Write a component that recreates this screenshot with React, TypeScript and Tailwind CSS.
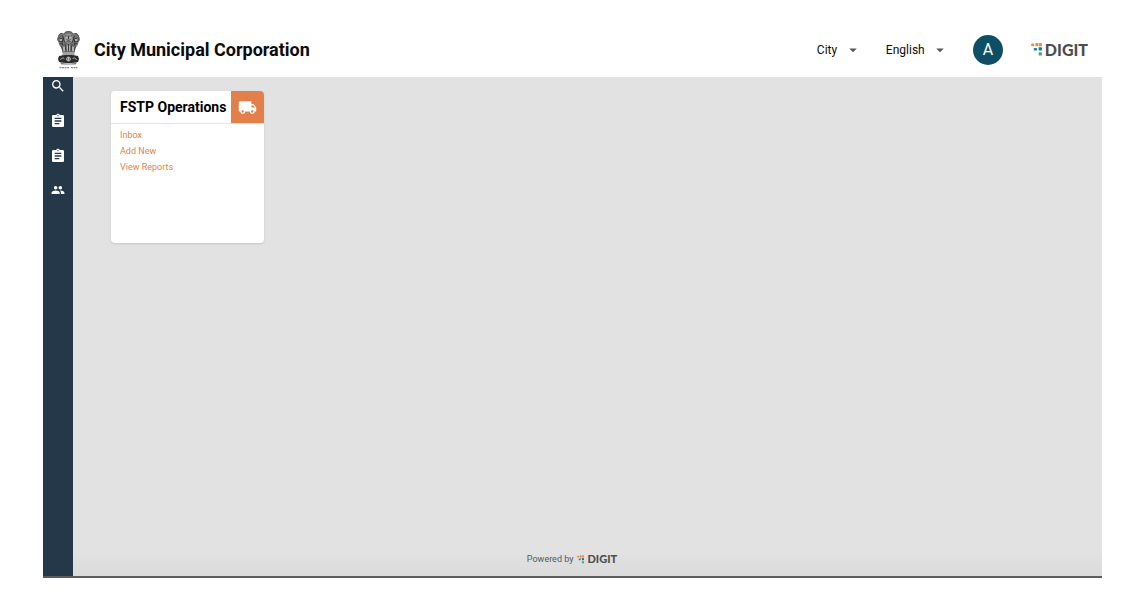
import { MdArrowDropDown, MdAssignment, MdLocalShipping, MdPeople, MdSearch } from 'react-icons/md';

const navItems = [
  { label: 'Search', Icon: MdSearch, size: 'size-4' },
  { label: 'Inbox', Icon: MdAssignment, size: 'size-4' },
  { label: 'Applications', Icon: MdAssignment, size: 'size-4' },
  { label: 'Employees', Icon: MdPeople, size: 'size-3.5' },
];

const cardLinks = ['Inbox', 'Add New', 'View Reports'];

const Emblem = () => (
  <svg className="w-[23px] h-[38px] shrink-0" viewBox="0 0 44 76" role="img" aria-label="State emblem">
    {/* lions */}
    <path d="M14 4c3-4 13-4 16 0l4 1c4-1 8 2 8 6 2 3 2 7 0 10 0 5-2 9-5 11l-3 9H10l-3-9c-3-2-5-6-5-11-2-3-2-7 0-10 0-4 4-7 8-6z" fill="#757575" />
    <path d="M15 8c4-3 10-3 14 0l2 6-3 8-6 3-6-3-3-8z" fill="#a0a0a0" />
    <g fill="none" stroke="#2b2b2b" strokeWidth="1.6">
      <path d="M14 4c3-4 13-4 16 0M10 5c-4-1-8 2-8 6-2 3-2 7 0 10m32-16c4-1 8 2 8 6 2 3 2 7 0 10" />
      <path d="M15 9c2 2 4 2 5 1m9-1c-2 2-4 2-5 1M22 9v7m-4 1c2 2 6 2 8 0m-8 4c2 1 6 1 8 0" />
      <path d="M13 12c-2 5 0 10 4 13m14-13c2 5 0 10-4 13M4 14l6 2m-7 5 8-1m29-6-6 2m7 5-8-1" />
      <path d="M9 9c3 3 3 7 1 11s0 8 2 11m23-22c-3 3-3 7-1 11s0 8-2 11M15 26l2 15m12-15-2 15M22 26v15" />
      <path d="M5 25l5 1m29-1-5 1M8 31l3 9m25-9-3 9" />
    </g>
    <g fill="#f0f0f0">
      <path d="M12 31h2v9h-2zm18 0h2v9h-2zM19 29h1v11h-1zm5 0h1v11h-1zM5 17h4v2H5zm30 0h4v2h-4z" />
      <circle cx="18" cy="12" r="1" />
      <circle cx="26" cy="12" r="1" />
    </g>
    {/* abacus */}
    <path d="M9 41h26v2H9z" fill="#333" />
    <path d="M11 43h22l2 6H9z" fill="#a3a3a3" />
    <path d="M3 50c6-3 32-3 38 0l2 6-2 6c-8 3-30 3-38 0l-2-6z" fill="#2c2c2c" />
    <circle cx="22" cy="56" r="4" fill="none" stroke="#ddd" strokeWidth="1.4" />
    <path d="M22 52v8m-4-4h8M6 58c2-5 6-5 8-2m16 0c2-3 6-3 8 2" stroke="#d0d0d0" strokeWidth="1.6" fill="none" />
    <path d="M5 63c10 3 24 3 34 0l-3 4H8z" fill="#777" />
    {/* motto */}
    <path d="M4 73h19m4 0h13" stroke="#888" strokeWidth="2.5" strokeDasharray="4 1" />
  </svg>
);

const DigitLogo = ({ small = false }: { small?: boolean }) => (
  <span className="flex items-center gap-[3px] font-[Lato,sans-serif] font-black text-[#4d4d4f]">
    <svg className={small ? 'w-[7px] h-[9px]' : 'w-[11px] h-[13px]'} viewBox="0 0 20 24" aria-hidden="true">
      <g fill="#f08a3c">
        <rect x="0" y="1" width="6" height="5" rx="2" />
        <rect x="8" y="0" width="5" height="6" rx="1" />
        <rect x="14" y="0" width="6" height="6" rx="1" />
      </g>
      <rect x="5" y="9" width="6" height="5" rx="1" fill="#2a7fb8" />
      <rect x="14" y="8" width="6" height="6" rx="1" fill="#1f6f9f" />
      <rect x="14" y="17" width="6" height="6" rx="1" fill="#3fae5a" />
    </svg>
    <span className={small ? 'text-[11px] leading-3' : 'text-base leading-4'}>DIGIT</span>
  </span>
);

const HeaderSelect = ({ label, value }: { label: string; value: string }) => (
  <label className="flex items-center gap-1.5">
    <select aria-label={label} className="appearance-none bg-transparent text-xs text-[#0b0c0c]">
      <option>{value}</option>
    </select>
    <MdArrowDropDown className="size-[18px] text-[#505a5f]" aria-hidden="true" />
  </label>
);

export default function App() {
  return (
    <div className="min-h-screen flex flex-col bg-white pl-[43px] pr-5 pb-[14px] font-[Roboto,sans-serif]">
      <header className="flex items-center h-[77px] pt-[22px] px-[14px]">
        <Emblem />
        <h1 className="ml-[14px] text-lg font-bold text-[#0b0c0c]">City Municipal Corporation</h1>
        <div className="ml-auto flex items-center">
          <HeaderSelect label="City" value="City" />
          <div className="ml-6">
            <HeaderSelect label="Language" value="English" />
          </div>
          <button className="ml-6 size-[30px] rounded-full bg-[#0f4f66] text-base text-white">A</button>
          <div className="ml-7">
            <DigitLogo />
          </div>
        </div>
      </header>

      <div className="flex grow border-b-2 border-[#5c5c5e]">
        <nav className="flex flex-col items-center gap-[19px] w-[30px] pt-px shrink-0 bg-[#25384a]">
          {navItems.map(({ label, Icon, size }) => (
            <button key={label} aria-label={label} className="text-white">
              <Icon className={size} />
            </button>
          ))}
        </nav>

        <main className="flex flex-col grow bg-[#e2e2e2]">
          <section className="w-[153px] min-h-[152px] mt-[14px] ml-[38px] rounded-sm bg-white shadow-sm overflow-hidden">
            <div className="flex items-stretch justify-between h-[33px] border-b border-[#e2e2e2]">
              <h2 className="pl-[9px] text-sm leading-8 font-bold whitespace-nowrap text-black">FSTP Operations</h2>
              <div className="flex items-center justify-center w-[33px] shrink-0 bg-[#e37f48] text-white">
                <MdLocalShipping className="size-[19px]" />
              </div>
            </div>
            <ul className="px-[9px] pt-[3px] text-[9px] leading-4 text-[#e37f48]">
              {cardLinks.map((link) => (
                <li key={link}>
                  <a href="#">{link}</a>
                </li>
              ))}
            </ul>
          </section>

          <footer className="mt-auto flex items-start justify-center gap-1 h-6 pt-px pr-[31px] bg-linear-to-b from-[#e2e2e2] to-[#dadada] text-[9px] leading-3 text-[#505a5f]">
            <span>Powered by</span>
            <DigitLogo small />
          </footer>
        </main>
      </div>
    </div>
  );
}
